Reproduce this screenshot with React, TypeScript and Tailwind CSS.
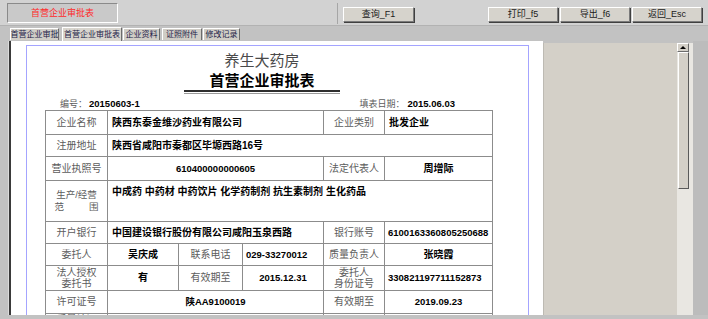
import React from "react";

const L =
  "border border-[#8c8c8c] text-center text-[#5c5c5c] font-normal text-[10px] leading-[12px] p-0 whitespace-nowrap";
const VB =
  "border border-[#8c8c8c] text-black font-bold leading-[12px] py-0 whitespace-nowrap overflow-hidden";
const V = `${VB} text-[10px] px-[4px]`;
const VN = `${VB} text-[9.5px] px-[3px]`;

function Btn({ label, w, ml }: { label: string; w: string; ml: string }) {
  return (
    <div
      className={`${w} ${ml} h-[15px] bg-[#d6d3cc] border border-t-white border-l-white border-r-[#7a7a7a] border-b-[#7a7a7a] shadow-[1px_1px_0_#404040] flex items-center justify-center text-[9px] leading-none text-[#1a1a1a] whitespace-nowrap`}
    >
      {label}
    </div>
  );
}

function Tab({
  label,
  w,
  ml,
  active,
}: {
  label: string;
  w: string;
  ml: string;
  active?: boolean;
}) {
  return (
    <div
      className={`${w} ${ml} ${
        active ? "h-[14px] mt-[1px] bg-[#d8d5ce]" : "h-[12px] mt-[2px] bg-[#d0cdc6]"
      } border-t border-l border-t-white border-l-white border-r border-r-[#6c6c6c] flex items-center justify-center text-[8px] leading-none text-[#1c1c48] whitespace-nowrap overflow-hidden`}
    >
      {label}
    </div>
  );
}

export default function App() {
  return (
    <div className="w-[708px] h-[319px] overflow-hidden bg-[#c2c2c2] font-['Liberation_Sans','Noto_Sans_CJK_SC',sans-serif] flex flex-col">
      {/* header */}
      <div className="h-[26px] shrink-0 bg-[#d2d2d2] border-b border-[#b2b2b2] flex items-start">
        <div className="ml-[7px] mt-[3px] w-[111px] h-[20px] border border-t-[#8a8a8a] border-l-[#8a8a8a] border-r-white border-b-white bg-[#c9c9c9] flex items-center justify-center text-[9px] leading-none text-[#ff2a2a]">
          首营企业审批表
        </div>
        <div className="ml-[219px] mt-[3px] h-[21px] border-l border-[#a6a6a6] flex items-start">
          <Btn label="查询_F1" w="w-[71px]" ml="ml-[5px] mt-[4px]" />
        </div>
        <Btn label="打印_f5" w="w-[70px]" ml="ml-[74px] mt-[7px]" />
        <Btn label="导出_f6" w="w-[70px]" ml="ml-[2px] mt-[7px]" />
        <Btn label="返回_Esc" w="w-[70px]" ml="ml-[2px] mt-[7px]" />
      </div>

      {/* tabs */}
      <div className="h-[15px] shrink-0 flex items-start bg-[#c2c2c2]">
        <Tab label="首营企业审批" w="w-[49px]" ml="ml-[10px]" />
        <Tab label="首营企业审批表" w="w-[60px]" ml="ml-[3px]" active />
        <Tab label="企业资料" w="w-[37px]" ml="ml-[1px]" />
        <Tab label="证照附件" w="w-[40px]" ml="ml-[2px]" />
        <Tab label="修改记录" w="w-[37px]" ml="ml-[1px]" />
      </div>

      {/* main */}
      <div className="h-[274px] shrink-0 flex">
        <div className="w-[9px] bg-[#c2c2c2] border-r border-[#dcdcdc]" />
        <div className="w-[2px] bg-[#3a3a3a]" />
        <div className="w-[532px] bg-white pt-[4px] pl-[15px] overflow-hidden">
          <div className="w-[503px] h-[400px] border-l border-t border-r border-[#a4a4ff]">
            {/* title */}
            <div className="ml-[157px] w-[156px] pt-[6px]">
              <div className="text-center text-[15px] leading-[18px] text-[#4a4a4a]">养生大药房</div>
              <div className="mt-[2px] text-center text-[15px] leading-[18px] font-bold text-black">
                首营企业审批表
              </div>
              <div className="h-[2px] bg-[#2e2e2e]" />
              <div className="mt-[1px] h-[1px] bg-[#9a9a9a]" />
            </div>

            {/* number row */}
            <div className="mt-[4px] ml-[33px] w-[395px] h-[12px] flex items-center justify-between leading-[12px]">
              <div className="flex items-center">
                <span className="text-[9px] text-[#5c5c5c]">编号：</span>
                <span className="ml-[2px] text-[9.5px] font-bold text-black">20150603-1</span>
              </div>
              <div className="flex items-center">
                <span className="text-[9px] text-[#5c5c5c]">填表日期：</span>
                <span className="ml-[3px] text-[9.5px] font-bold text-black">2015.06.03</span>
              </div>
            </div>

            {/* table */}
            <table className="ml-[18px] w-[447px] table-fixed border-collapse">
              <colgroup>
                <col className="w-[62px]" />
                <col className="w-[71px]" />
                <col className="w-[64px]" />
                <col className="w-[81px]" />
                <col className="w-[61px]" />
                <col className="w-[108px]" />
              </colgroup>
              <tbody>
                <tr className="h-[24px]">
                  <td className={L}>企业名称</td>
                  <td className={`${V} text-left`} colSpan={3}>
                    陕西东泰金维沙药业有限公司
                  </td>
                  <td className={L}>企业类别</td>
                  <td className={`${V} text-left`}>批发企业</td>
                </tr>
                <tr className="h-[22px]">
                  <td className={L}>注册地址</td>
                  <td className={`${V} text-left`} colSpan={5}>
                    陕西省咸阳市秦都区毕塬西路16号
                  </td>
                </tr>
                <tr className="h-[24px]">
                  <td className={L}>营业执照号</td>
                  <td className={`${VN} text-center`} colSpan={3}>
                    610400000000605
                  </td>
                  <td className={L}>法定代表人</td>
                  <td className={`${V} text-center`}>周增际</td>
                </tr>
                <tr className="h-[41px]">
                  <td className={L}>
                    <div className="mx-auto w-[44px] text-[9.5px]">
                      <div>生产/经营</div>
                      <div className="flex justify-between">
                        <span>范</span>
                        <span>围</span>
                      </div>
                    </div>
                  </td>
                  <td className={`${V} text-left align-top pt-[5px]`} colSpan={5}>
                    中成药 中药材 中药饮片 化学药制剂 抗生素制剂 生化药品
                  </td>
                </tr>
                <tr className="h-[22px]">
                  <td className={L}>开户银行</td>
                  <td className={`${V} text-left`} colSpan={3}>
                    中国建设银行股份有限公司咸阳玉泉西路
                  </td>
                  <td className={L}>银行账号</td>
                  <td className={`${VN} text-left`}>6100163360805250688</td>
                </tr>
                <tr className="h-[22px]">
                  <td className={L}>委托人</td>
                  <td className={`${V} text-center`}>吴庆成</td>
                  <td className={L}>联系电话</td>
                  <td className={`${VN} text-left`}>029-33270012</td>
                  <td className={L}>质量负责人</td>
                  <td className={`${V} text-center`}>张晓霞</td>
                </tr>
                <tr className="h-[25px]">
                  <td className={L}>
                    <div className="leading-[11px]">
                      法人授权
                      <br />
                      委托书
                    </div>
                  </td>
                  <td className={`${V} text-center`}>有</td>
                  <td className={L}>有效期至</td>
                  <td className={`${VN} text-center`}>2015.12.31</td>
                  <td className={L}>
                    <div className="leading-[11px]">
                      委托人
                      <br />
                      身份证号
                    </div>
                  </td>
                  <td className={`${VN} text-left`}>330821197711152873</td>
                </tr>
                <tr className="h-[23px]">
                  <td className={L}>许可证号</td>
                  <td className={`${VN} text-center`} colSpan={3}>
                    陕AA9100019
                  </td>
                  <td className={L}>有效期至</td>
                  <td className={`${VN} text-center`}>2019.09.23</td>
                </tr>
                <tr className="h-[24px]">
                  <td className={`${L} align-top`}>质量认证</td>
                  <td className={V} colSpan={3}></td>
                  <td className={L}></td>
                  <td className={V}></td>
                </tr>
              </tbody>
            </table>
          </div>
        </div>
        <div className="w-[134px] mt-[2px] bg-[#d4d0c8] border-l border-[#bdbab3]" />
        {/* scrollbar */}
        <div className="w-[16px] mt-[2px] bg-[#e9e7e2] flex flex-col">
          <div className="w-[12px] h-[9px] bg-[#d4d0c8] border border-t-white border-l-white border-r-[#6c6c6c] border-b-[#6c6c6c] flex items-center justify-center">
            <div className="w-0 h-0 border-l-[3px] border-r-[3px] border-b-[3px] border-l-transparent border-r-transparent border-b-black" />
          </div>
          <div className="ml-[1px] w-[11px] h-[137px] bg-[#d4d0c8] border border-t-white border-l-white border-r-[#5a5a5a] border-b-[#5a5a5a]" />
        </div>
        <div className="flex-1 bg-[#bcbcbc]" />
      </div>
      <div className="flex-1 bg-[#c2c2c2]" />
    </div>
  );
}
